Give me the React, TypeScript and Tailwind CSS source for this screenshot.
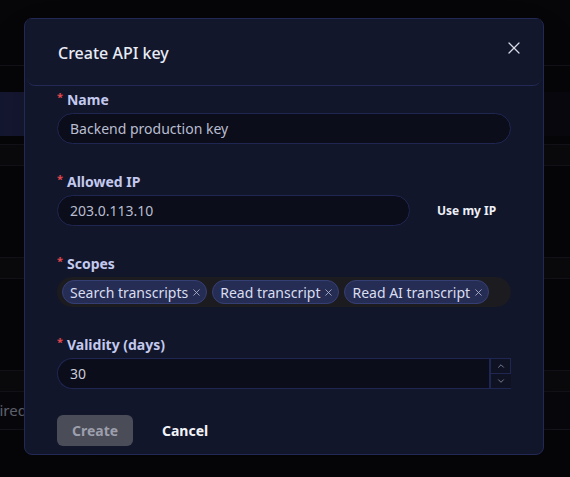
import { X, ChevronUp, ChevronDown } from 'lucide-react'

const scopes = ['Search transcripts', 'Read transcript', 'Read AI transcript']

const Label: React.FC<{ text: string }> = ({ text }) => (
  <div className="flex items-start h-[20px] mb-[3px] text-[14px] font-bold text-[#c3c9ee] leading-[20px]">
    <span className="text-[#e5484d] text-[11px] leading-[14px] mr-[4px]">*</span>
    {text}
  </div>
)

const Background: React.FC = () => (
  <div className="flex flex-col w-full h-full bg-[#08080c]">
    <div className="h-[66px] border-b border-[#17171f]" />
    <div className="h-[26px]" />
    <div className="h-[44px] flex">
      <div className="w-[52px] bg-[#191d3c]" />
      <div className="flex-1 bg-[#0a0a12]" />
    </div>
    <div className="h-[8px]" />
    <div className="h-[22px] bg-[#0d0d11] border-y border-[#17171f]" />
    <div className="h-[91px]" />
    <div className="h-[22px] bg-[#0d0d11] border-y border-[#17171f]" />
    <div className="h-[91px]" />
    <div className="h-[22px] bg-[#0d0d11] border-y border-[#17171f]" />
    <div className="h-[38px] bg-[#0b0b10] border-b border-[#1a1a24] flex items-center pl-[2px] text-[15px] text-[#7c7e8c]">
      Expired
    </div>
    <div className="flex-1" />
  </div>
)

export default function App() {
  return (
    <div
      className="relative w-[570px] h-[477px] overflow-hidden"
      style={{ fontFamily: '"Noto Sans", "Open Sans", sans-serif' }}
    >
      <div className="absolute inset-0 -left-[28px]">
        <Background />
      </div>
      <div className="absolute inset-0 bg-black/20" />

      <div className="absolute left-[24px] top-[18px] w-[520px] h-[437px] rounded-[8px] border border-[#222955] bg-[#12162a] shadow-2xl flex flex-col">
        <div className="h-[67px] mx-[2px] flex items-center justify-between pl-[31px] pr-[17px] border-b border-[#222955] rounded-b-[8px] bg-[#13172c]">
          <h2 className="text-[16px] font-medium text-[#e9ebf6] mt-[2px]">Create API key</h2>
          <X size={20} strokeWidth={1.5} className="text-[#d6d9e6] mb-[8px]" />
        </div>

        <div className="flex flex-col px-[32px] pt-[4px]">
          <Label text="Name" />
          <div className="h-[31px] w-[454px] rounded-full border border-[#1f2652] bg-[#0b0d1a] flex items-center pl-[12px] text-[14px] text-[#b9bdd0]">
            Backend production key
          </div>

          <div className="h-[28px]" />
          <Label text="Allowed IP" />
          <div className="flex items-center">
            <div className="h-[31px] w-[353px] rounded-full border border-[#1f2652] bg-[#0b0d1a] flex items-center pl-[12px] text-[14px] text-[#b9bdd0]">
              203.0.113.10
            </div>
            <button className="ml-[27px] text-[12px] font-bold text-[#eef0f8]">Use my IP</button>
          </div>

          <div className="h-[28px]" />
          <Label text="Scopes" />
          <div className="h-[30px] w-[454px] rounded-[15px] bg-[#1b1b20] flex items-center gap-[5px] px-[5px]">
            {scopes.map(s => (
              <span
                key={s}
                className="h-[24px] flex items-center gap-[3px] rounded-full border border-[#363f74] bg-[#262d55] pl-[7px] pr-[4px] text-[14px] text-[#d9ddf0]"
              >
                {s}
                <X size={11} strokeWidth={1.8} className="text-[#b4b9d2]" />
              </span>
            ))}
          </div>

          <div className="h-[28px]" />
          <Label text="Validity (days)" />
          <div className="flex h-[31px] w-[454px]">
            <div className="flex-1 rounded-l-full border border-r-0 border-[#1f2652] bg-[#0b0d1a] flex items-center pl-[12px] text-[14px] text-[#c9ccdb]">
              30
            </div>
            <div className="w-[22px] flex flex-col border-l-2 border-y border-[#1f2652] bg-[#0f1222]">
              <div className="flex-1 flex items-center justify-center border-b border-r border-[#1f2652]">
                <ChevronUp size={10} strokeWidth={1.6} className="text-[#aab0c8]" />
              </div>
              <div className="flex-1 flex items-center justify-center">
                <ChevronDown size={10} strokeWidth={1.6} className="text-[#aab0c8]" />
              </div>
            </div>
          </div>

          <div className="h-[26px]" />
          <div className="flex items-center">
            <button className="h-[31px] w-[76px] rounded-[6px] bg-[#4a4c58] text-[14px] font-bold text-[#9d9fac]">
              Create
            </button>
            <button className="ml-[29px] text-[14px] font-bold text-[#f2f3f8]">Cancel</button>
          </div>
        </div>
      </div>
    </div>
  )
}
